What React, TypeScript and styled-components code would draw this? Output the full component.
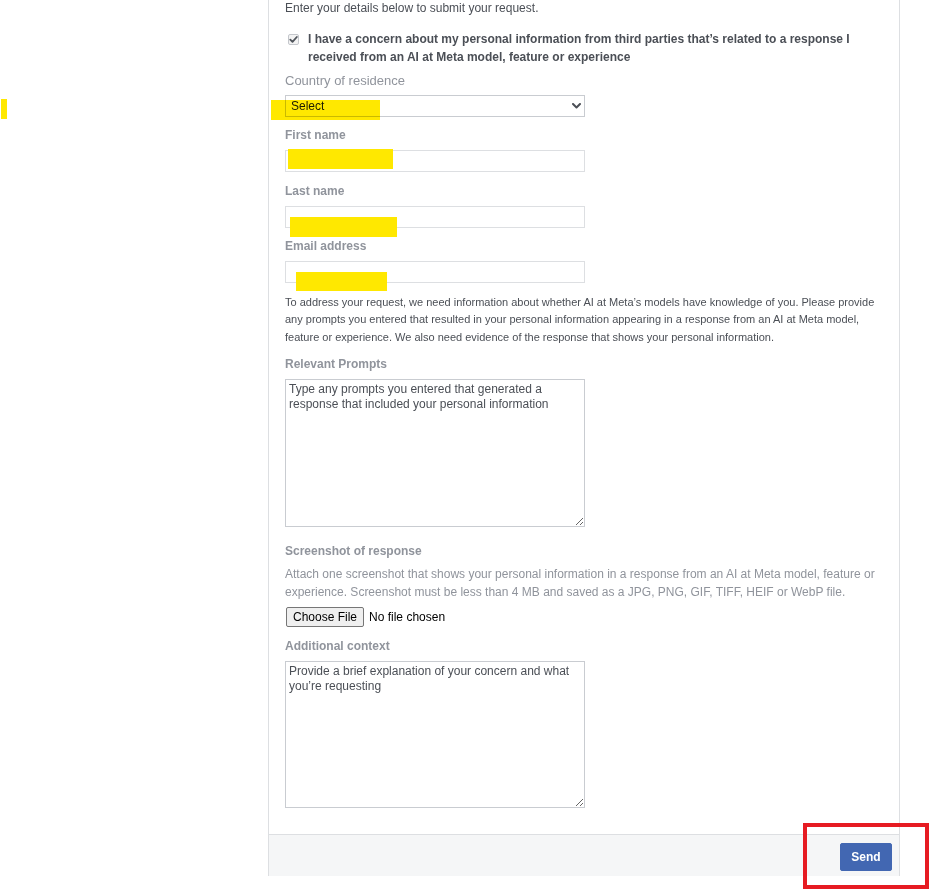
import React from "react";
import styled, { createGlobalStyle, css } from "styled-components";

const GlobalStyle = createGlobalStyle`
  html, body {
    margin: 0;
    padding: 0;
    background: #ffffff;
  }
  body {
    font-family: "Liberation Sans", Arial, Helvetica, sans-serif;
  }
`;

const Page = styled.div`
  position: relative;
  width: 941px;
  height: 890px;
  overflow: hidden;
  background: #fff;
`;

const Panel = styled.div`
  margin-left: 268px;
  width: 632px;
  box-sizing: border-box;
  border-left: 1px solid #dddfe2;
  border-right: 1px solid #dddfe2;
  background: #fff;
`;

const Content = styled.div`
  display: flex;
  flex-direction: column;
  align-items: flex-start;
  padding: 0 16px 26px 16px;
`;

const Intro = styled.p`
  margin: 0 0 14px;
  font-size: 12px;
  line-height: 16px;
  color: #4b4f56;
`;

const CheckRow = styled.label`
  display: flex;
  align-items: flex-start;
  gap: 9px;
  margin: 0 0 7px;
`;

const CheckBox = styled.span`
  flex: none;
  width: 11px;
  height: 11px;
  margin: 4px 0 0 3px;
  box-sizing: border-box;
  border: 1px solid #c4c7cc;
  border-radius: 2px;
  background: #f3f3f3;
  display: flex;
  align-items: center;
  justify-content: center;
`;

const CheckText = styled.span`
  font-size: 12px;
  font-weight: bold;
  line-height: 18px;
  color: #4b4f56;
`;

const Label = styled.div<{ $light?: boolean; $mb?: number }>`
  font-size: 12px;
  font-weight: bold;
  line-height: 16px;
  color: #90949c;
  margin-bottom: ${(p) => (p.$mb ?? 7)}px;
  ${(p) =>
    p.$light &&
    css`
      font-size: 13px;
      font-weight: normal;
    `}
`;

const SelectWrap = styled.div`
  position: relative;
  width: 300px;
  height: 22px;
  margin-bottom: 10px;
`;

const Select = styled.select`
  appearance: none;
  -webkit-appearance: none;
  display: block;
  width: 300px;
  height: 22px;
  box-sizing: border-box;
  border: 1px solid #c9ccd1;
  border-radius: 0;
  background: #fff;
  padding: 0 20px 0 5px;
  font-family: "Liberation Sans", Arial, sans-serif;
  font-size: 12px;
  color: #1c1e21;
  outline: none;
`;

const Chevron = styled.svg`
  position: absolute;
  right: 4px;
  top: 8px;
  pointer-events: none;
`;

const TextInput = styled.input`
  display: block;
  width: 300px;
  height: 22px;
  box-sizing: border-box;
  border: 1px solid #dddfe2;
  border-radius: 0;
  background: #fff;
  padding: 0 5px;
  margin: 0 0 10.5px;
  font-family: "Liberation Sans", Arial, sans-serif;
  font-size: 12px;
  outline: none;
`;

const Paragraph = styled.p<{ $size?: number; $lh?: number; $color?: string; $mt?: number; $mb?: number }>`
  margin: ${(p) => p.$mt ?? 0}px 0 ${(p) => p.$mb ?? 0}px;
  font-size: ${(p) => p.$size ?? 12}px;
  line-height: ${(p) => p.$lh ?? 18}px;
  color: ${(p) => p.$color ?? "#4b4f56"};
`;

const TextArea = styled.textarea<{ $h: number; $mb: number }>`
  display: block;
  width: 300px;
  height: ${(p) => p.$h}px;
  box-sizing: border-box;
  border: 1px solid #c9ccd1;
  border-radius: 0;
  padding: 2px 3px;
  margin: 0 0 ${(p) => p.$mb}px;
  font-family: "Liberation Sans", Arial, sans-serif;
  font-size: 12px;
  line-height: 15px;
  color: #1c1e21;
  resize: both;
  outline: none;
  &::placeholder {
    color: #4b4f56;
    opacity: 1;
  }
`;

const FileRow = styled.div`
  display: flex;
  align-items: center;
  gap: 5px;
  margin: 6px 0 11px 1px;
`;

const FileButton = styled.button`
  height: 20px;
  box-sizing: border-box;
  padding: 0 6px;
  border: 1px solid #767676;
  border-radius: 2px;
  background: #efefef;
  font-family: "Liberation Sans", Arial, sans-serif;
  font-size: 12px;
  color: #000;
`;

const FileStatus = styled.span`
  font-size: 12px;
  color: #000;
`;

const Footer = styled.div`
  display: flex;
  justify-content: flex-end;
  border-top: 1px solid #dddfe2;
  background: #f5f6f7;
  padding: 8px 7px 5px;
`;

const SendButton = styled.button`
  width: 52px;
  height: 28px;
  box-sizing: border-box;
  border: 1px solid #4267b2;
  border-radius: 2px;
  background: #4267b2;
  color: #fff;
  font-family: "Liberation Sans", Arial, sans-serif;
  font-size: 12px;
  font-weight: bold;
  padding: 0;
`;

const Highlight = styled.div<{ $multiply?: boolean }>`
  position: absolute;
  background: #ffe800;
  pointer-events: none;
  ${(p) =>
    p.$multiply &&
    css`
      mix-blend-mode: multiply;
    `}
`;

const RedFrame = styled.div`
  position: absolute;
  left: 803px;
  top: 823px;
  width: 126px;
  height: 66px;
  box-sizing: border-box;
  border: 4px solid #e61b22;
  pointer-events: none;
`;

const highlights = [
  { left: 1, top: 99, width: 6, height: 20 },
  { left: 271, top: 100, width: 109, height: 20, multiply: true },
  { left: 288, top: 149, width: 105, height: 20 },
  { left: 290, top: 217, width: 107, height: 20 },
  { left: 296, top: 272, width: 91, height: 19 },
];

export default function App() {
  return (
    <Page>
      <GlobalStyle />
      <Panel>
        <Content>
          <Intro>Enter your details below to submit your request.</Intro>
          <CheckRow>
            <CheckBox>
              <svg width="9" height="9" viewBox="0 0 9 9">
                <polyline
                  points="1.3,4.6 3.5,6.9 7.8,2"
                  fill="none"
                  stroke="#50555c"
                  strokeWidth="1.8"
                  strokeLinecap="round"
                  strokeLinejoin="round"
                />
              </svg>
            </CheckBox>
            <CheckText>
              I have a concern about my personal information from third parties that’s related to a response I
              received from an AI at Meta model, feature or experience
            </CheckText>
          </CheckRow>

          <Label $light $mb={6}>Country of residence</Label>
          <SelectWrap>
            <Select defaultValue="">
              <option value="">Select</option>
            </Select>
            <Chevron width="9" height="6" viewBox="0 0 9 6">
              <polyline
                points="1,1 4.5,4.5 8,1"
                fill="none"
                stroke="#4b4f56"
                strokeWidth="2"
                strokeLinecap="round"
                strokeLinejoin="round"
              />
            </Chevron>
          </SelectWrap>

          <Label>First name</Label>
          <TextInput type="text" />
          <Label>Last name</Label>
          <TextInput type="text" />
          <Label>Email address</Label>
          <TextInput type="email" />

          <Paragraph $size={11} $lh={17.5} $mt={0} $mb={10}>
            To address your request, we need information about whether AI at Meta’s models have knowledge of you.
            Please provide any prompts you entered that resulted in your personal information appearing in a
            response from an AI at Meta model, feature or experience. We also need evidence of the response that
            shows your personal information.
          </Paragraph>

          <Label>Relevant Prompts</Label>
          <TextArea
            $h={148}
            $mb={16}
            placeholder="Type any prompts you entered that generated a response that included your personal information"
          />

          <Label $mb={6}>Screenshot of response</Label>
          <Paragraph $color="#90949c">
            Attach one screenshot that shows your personal information in a response from an AI at Meta model,
            feature or experience. Screenshot must be less than 4 MB and saved as a JPG, PNG, GIF, TIFF, HEIF or
            WebP file.
          </Paragraph>
          <FileRow>
            <FileButton type="button">Choose File</FileButton>
            <FileStatus>No file chosen</FileStatus>
          </FileRow>

          <Label>Additional context</Label>
          <TextArea
            $h={147}
            $mb={0}
            placeholder="Provide a brief explanation of your concern and what you’re requesting"
          />
        </Content>
        <Footer>
          <SendButton type="button">Send</SendButton>
        </Footer>
      </Panel>

      {highlights.map((h, i) => (
        <Highlight
          key={i}
          $multiply={h.multiply}
          style={{ left: h.left, top: h.top, width: h.width, height: h.height }}
        />
      ))}
      <RedFrame />
    </Page>
  );
}
